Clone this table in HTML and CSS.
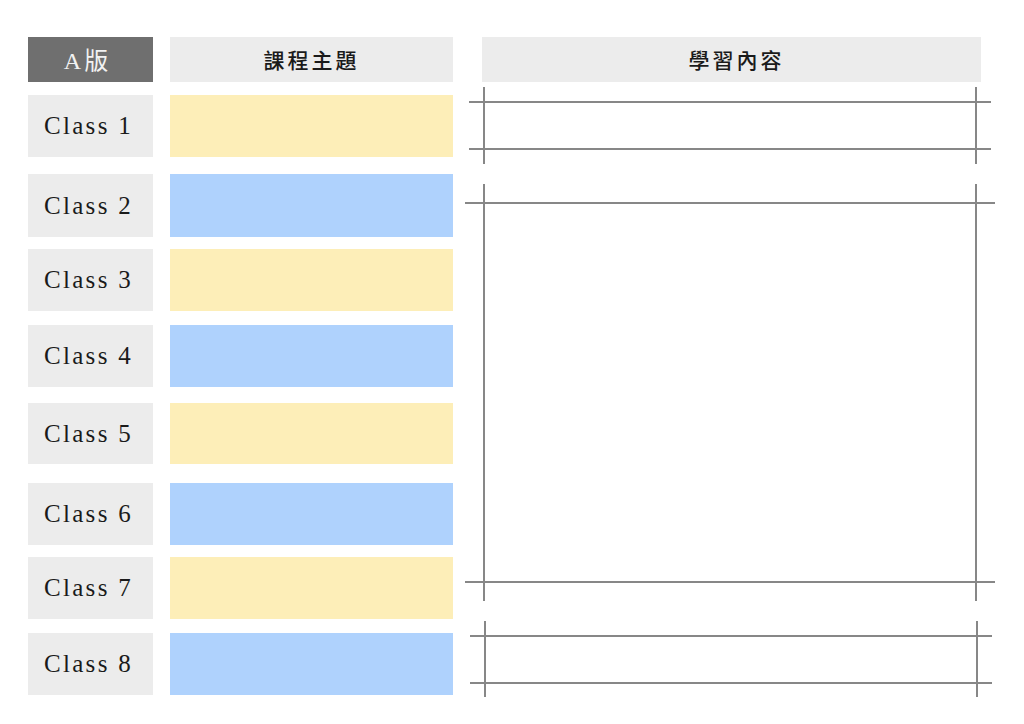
FILE: index.html
```html
<!DOCTYPE html>
<html lang="zh-Hant">
<head>
<meta charset="utf-8">
<title>A版 課程</title>
<link rel="stylesheet" href="styles.css">
</head>
<body>
<div class="page">
  <div class="left">
    <div class="row head-row">
      <div class="label label-dark">A版</div>
      <div class="topic topic-head">課程主題</div>
    </div>
    <div class="row"><div class="label">Class 1</div><div class="topic yellow"></div></div>
    <div class="row"><div class="label">Class 2</div><div class="topic blue"></div></div>
    <div class="row"><div class="label">Class 3</div><div class="topic yellow"></div></div>
    <div class="row"><div class="label">Class 4</div><div class="topic blue"></div></div>
    <div class="row"><div class="label">Class 5</div><div class="topic yellow"></div></div>
    <div class="row"><div class="label">Class 6</div><div class="topic blue"></div></div>
    <div class="row"><div class="label">Class 7</div><div class="topic yellow"></div></div>
    <div class="row"><div class="label">Class 8</div><div class="topic blue"></div></div>
  </div>
  <div class="right">
    <div class="content-head">學習內容</div>
    <div class="frame frame-small frame-first"><div class="frame-inner"></div></div>
    <div class="frame frame-big"><div class="frame-inner"></div></div>
    <div class="frame frame-small frame-last"><div class="frame-inner"></div></div>
  </div>
</div>
</body>
</html>
```
FILE: styles.css
```css
* { box-sizing: border-box; }
html, body { margin: 0; padding: 0; background: #ffffff; }
body { width: 1024px; height: 724px; overflow: hidden; }

.page {
  display: flex;
  padding: 37px 0 0 28px;
  gap: 29px;
}

.left {
  display: flex;
  flex-direction: column;
  width: 425px;
}

.row {
  display: flex;
  gap: 17px;
  height: 62px;
}
.head-row { height: 45px; }
.row:nth-child(2) { margin-top: 13px; }
.row:nth-child(3) { margin-top: 17px; height: 63px; }
.row:nth-child(4) { margin-top: 12px; }
.row:nth-child(5) { margin-top: 14px; }
.row:nth-child(6) { margin-top: 16px; height: 61px; }
.row:nth-child(7) { margin-top: 19px; }
.row:nth-child(8) { margin-top: 12px; }
.row:nth-child(9) { margin-top: 14px; }

.label {
  width: 125px;
  background: #ececec;
  display: flex;
  align-items: center;
  justify-content: center;
  font-family: "Liberation Serif", "Noto Sans CJK TC", serif;
  font-size: 25px;
  letter-spacing: 2.3px;
  color: #1a1a1a;
  padding-right: 4px;
}
.label-dark {
  background: #6f6f6f;
  color: #f2f2f2;
  font-size: 24px;
  letter-spacing: 3px;
  padding-right: 6px;
  padding-bottom: 2px;
}

.topic {
  width: 283px;
}
.topic-head, .content-head {
  background: #ececec;
  display: flex;
  align-items: center;
  justify-content: center;
  font-family: "Noto Sans CJK TC", sans-serif;
  font-size: 21px;
  font-weight: 500;
  letter-spacing: 3px;
  color: #1a1a1a;
  padding-bottom: 2px;
}
.content-head { padding-left: 10px; }
.yellow { background: #fdeeb8; }
.blue { background: #afd2fd; }

.right {
  display: flex;
  flex-direction: column;
  width: 499px;
}
.content-head { height: 45px; }

.frame {
  margin-left: 1px;
  width: 494px;
  border-left: 2px solid #878787;
  border-right: 2px solid #878787;
}
.frame-inner {
  border-top: 2px solid #878787;
  border-bottom: 2px solid #878787;
}
.frame-small { padding: 14px 0 14px; }
.frame-small .frame-inner { height: 49px; margin: 0 -16px; }
.frame-first { margin-top: 5px; }
.frame-big { margin-top: 20px; padding: 18px 0; }
.frame-big .frame-inner { height: 381px; margin: 0 -20px; }
.frame-last { margin-top: 20px; margin-left: 2px; padding-bottom: 13px; }
```
